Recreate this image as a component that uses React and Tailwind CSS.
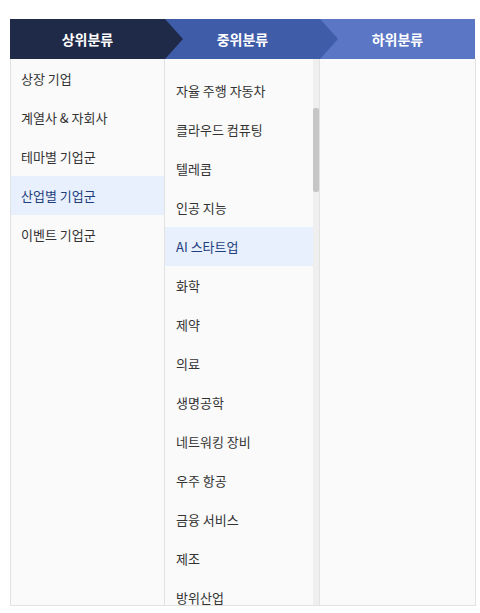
import { useState } from 'react';

const topCategories = ['상장 기업', '계열사 & 자회사', '테마별 기업군', '산업별 기업군', '이벤트 기업군'];

const midCategories = [
  '자율 주행 자동차',
  '클라우드 컴퓨팅',
  '텔레콤',
  '인공 지능',
  'AI 스타트업',
  '화학',
  '제약',
  '의료',
  '생명공학',
  '네트워킹 장비',
  '우주 항공',
  '금융 서비스',
  '제조',
  '방위산업',
];

const HeaderCell = ({ label, bg, arrow, z }) => (
  <div className={`relative flex h-[40px] w-[155px] items-center justify-center ${bg} ${z}`}>
    <span className="text-[14px] font-bold text-white">{label}</span>
    {arrow && (
      <div className={`absolute left-full top-0 h-full w-[18px] ${bg} [clip-path:polygon(0_0,100%_50%,0_100%)]`} />
    )}
  </div>
);

export default function App() {
  const [top, setTop] = useState('산업별 기업군');
  const [mid, setMid] = useState('AI 스타트업');

  return (
    <div className="h-[613px] w-[480px] bg-white pl-[10px] pt-[19px] font-['Noto_Sans_CJK_KR',sans-serif]">
      <div className="w-[466px]">
        {/* Header */}
        <div className="flex">
          <HeaderCell label="상위분류" bg="bg-[#1f2a48]" arrow z="z-30" />
          <HeaderCell label="중위분류" bg="bg-[#3f5ca9]" arrow z="z-20" />
          <HeaderCell label="하위분류" bg="bg-[#5a76c5]" z="z-10" />
        </div>

        {/* Body */}
        <div className="flex h-[547px] border-x border-b border-[#e2e2e2] bg-[#fafafa]">
          <div className="w-[154px] border-r border-[#e2e2e2]">
            {topCategories.map((item) => (
              <div
                key={item}
                onClick={() => setTop(item)}
                className={`flex h-[39px] cursor-pointer items-center px-[10px] text-[13px] ${
                  top === item ? 'bg-[#e8f0fd] text-[#1f3e7c]' : 'text-[#333]'
                }`}
              >
                {item}
              </div>
            ))}
          </div>

          <div className="relative w-[155px] overflow-hidden border-r border-[#e2e2e2]">
            <div className="pr-[6px] pt-[12px]">
              {midCategories.map((item) => (
                <div
                  key={item}
                  onClick={() => setMid(item)}
                  className={`flex h-[39px] cursor-pointer items-center px-[11px] text-[13px] ${
                    mid === item ? 'bg-[#e8f0fd] text-[#1f3e7c]' : 'text-[#333]'
                  }`}
                >
                  {item}
                </div>
              ))}
            </div>
            {/* scrollbar */}
            <div className="absolute right-0 top-0 h-full w-[6px] bg-[#efefef]">
              <div className="mt-[49px] h-[84px] w-full rounded-[2px] bg-[#c6c6c6]" />
            </div>
          </div>

          <div className="flex-1" />
        </div>
      </div>
    </div>
  );
}
